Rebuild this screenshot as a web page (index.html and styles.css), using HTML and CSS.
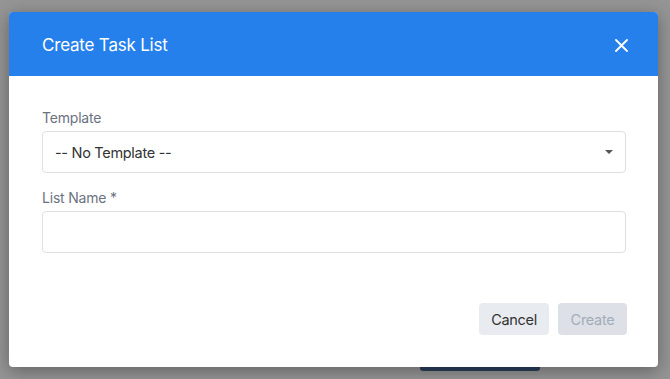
FILE: index.html
```html
<!DOCTYPE html>
<html lang="en">
<head>
    <meta charset="UTF-8">
    <meta name="viewport" content="width=device-width, initial-scale=1.0">
    <title>Create Task List</title>
    <link rel="stylesheet" href="styles.css">
</head>
<body>
    <div class="backdrop">
        <div class="modal">
            <div class="modal-header">
                <h3 class="modal-title">Create Task List</h3>
                <button type="button" class="close-btn" aria-label="Close">
                    <svg width="13" height="13" viewBox="0 0 13 13">
                        <path d="M1 1L12 12M12 1L1 12" stroke="#fff" stroke-width="1.8" stroke-linecap="round"/>
                    </svg>
                </button>
            </div>
            <form class="modal-body" id="taskListForm">
                <label for="template">Template</label>
                <div class="select-wrap">
                    <select id="template" name="template">
                        <option value="">-- No Template --</option>
                    </select>
                    <span class="caret"></span>
                </div>

                <label for="listName">List Name *</label>
                <input type="text" id="listName" name="listName">

                <div class="modal-footer">
                    <button type="button" class="btn btn-cancel">Cancel</button>
                    <button type="button" class="btn btn-create" disabled>Create</button>
                </div>
            </form>
        </div>
        <div class="page-button"></div>
    </div>
</body>
</html>
```

FILE: styles.css
```css
* {
    box-sizing: border-box;
}

body {
    margin: 0;
    font-family: Inter, "Liberation Sans", Arial, sans-serif;
    background-color: #959595;
    height: 379px;
    overflow: hidden;
}

.backdrop {
    padding: 12px 0 0 9px;
}

.modal {
    width: 649px;
    height: 355px;
    background-color: #fff;
    border-radius: 4px;
    overflow: hidden;
    box-shadow: 0 4px 18px rgba(0, 0, 0, 0.35);
    position: relative;
    z-index: 1;
    display: flex;
    flex-direction: column;
}

.modal-header {
    height: 64px;
    background-color: #2680eb;
    display: flex;
    align-items: center;
    justify-content: space-between;
    padding: 2px 30px 0 33px;
}

.modal-title {
    margin: 0;
    color: #fff;
    font-size: 17px;
    font-weight: 400;
    letter-spacing: -0.2px;
}

.close-btn {
    background: none;
    border: none;
    padding: 0;
    display: flex;
    cursor: pointer;
}

.modal-body {
    flex: 1;
    padding: 33px 32px 0 33px;
    display: flex;
    flex-direction: column;
}

.modal-body label {
    color: #6b7280;
    font-size: 14px;
    margin-bottom: 5px;
    line-height: 17px;
    letter-spacing: -0.2px;
}

.select-wrap {
    position: relative;
    margin-bottom: 16px;
}

.modal-body select,
.modal-body input[type="text"] {
    display: block;
    width: 100%;
    height: 42px;
    border: 1px solid #dcdfe4;
    border-radius: 4px;
    background-color: #fff;
    font-family: inherit;
    font-size: 14.5px;
    color: #333;
    padding: 0 12px;
    appearance: none;
    -webkit-appearance: none;
    outline: none;
    letter-spacing: -0.3px;
}

.caret {
    position: absolute;
    right: 13px;
    top: 19px;
    width: 0;
    height: 0;
    border-left: 4px solid transparent;
    border-right: 4px solid transparent;
    border-top: 4px solid #555;
}

.modal-footer {
    display: flex;
    justify-content: flex-end;
    gap: 9px;
    margin-top: 50px;
    margin-right: -1px;
}

.btn {
    height: 32px;
    padding: 0 11px;
    border: none;
    border-radius: 4px;
    font-family: inherit;
    font-size: 14.5px;
    letter-spacing: -0.3px;
}

.btn-cancel {
    width: 70px;
    background-color: #e8ebef;
    color: #333;
    cursor: pointer;
}

.btn-create {
    width: 69px;
    background-color: #dde1e7;
    color: #a3acb8;
}

.page-button {
    width: 120px;
    height: 4px;
    margin-left: 411px;
    background-color: #2b3f5a;
    border-radius: 0 0 3px 3px;
}
```
